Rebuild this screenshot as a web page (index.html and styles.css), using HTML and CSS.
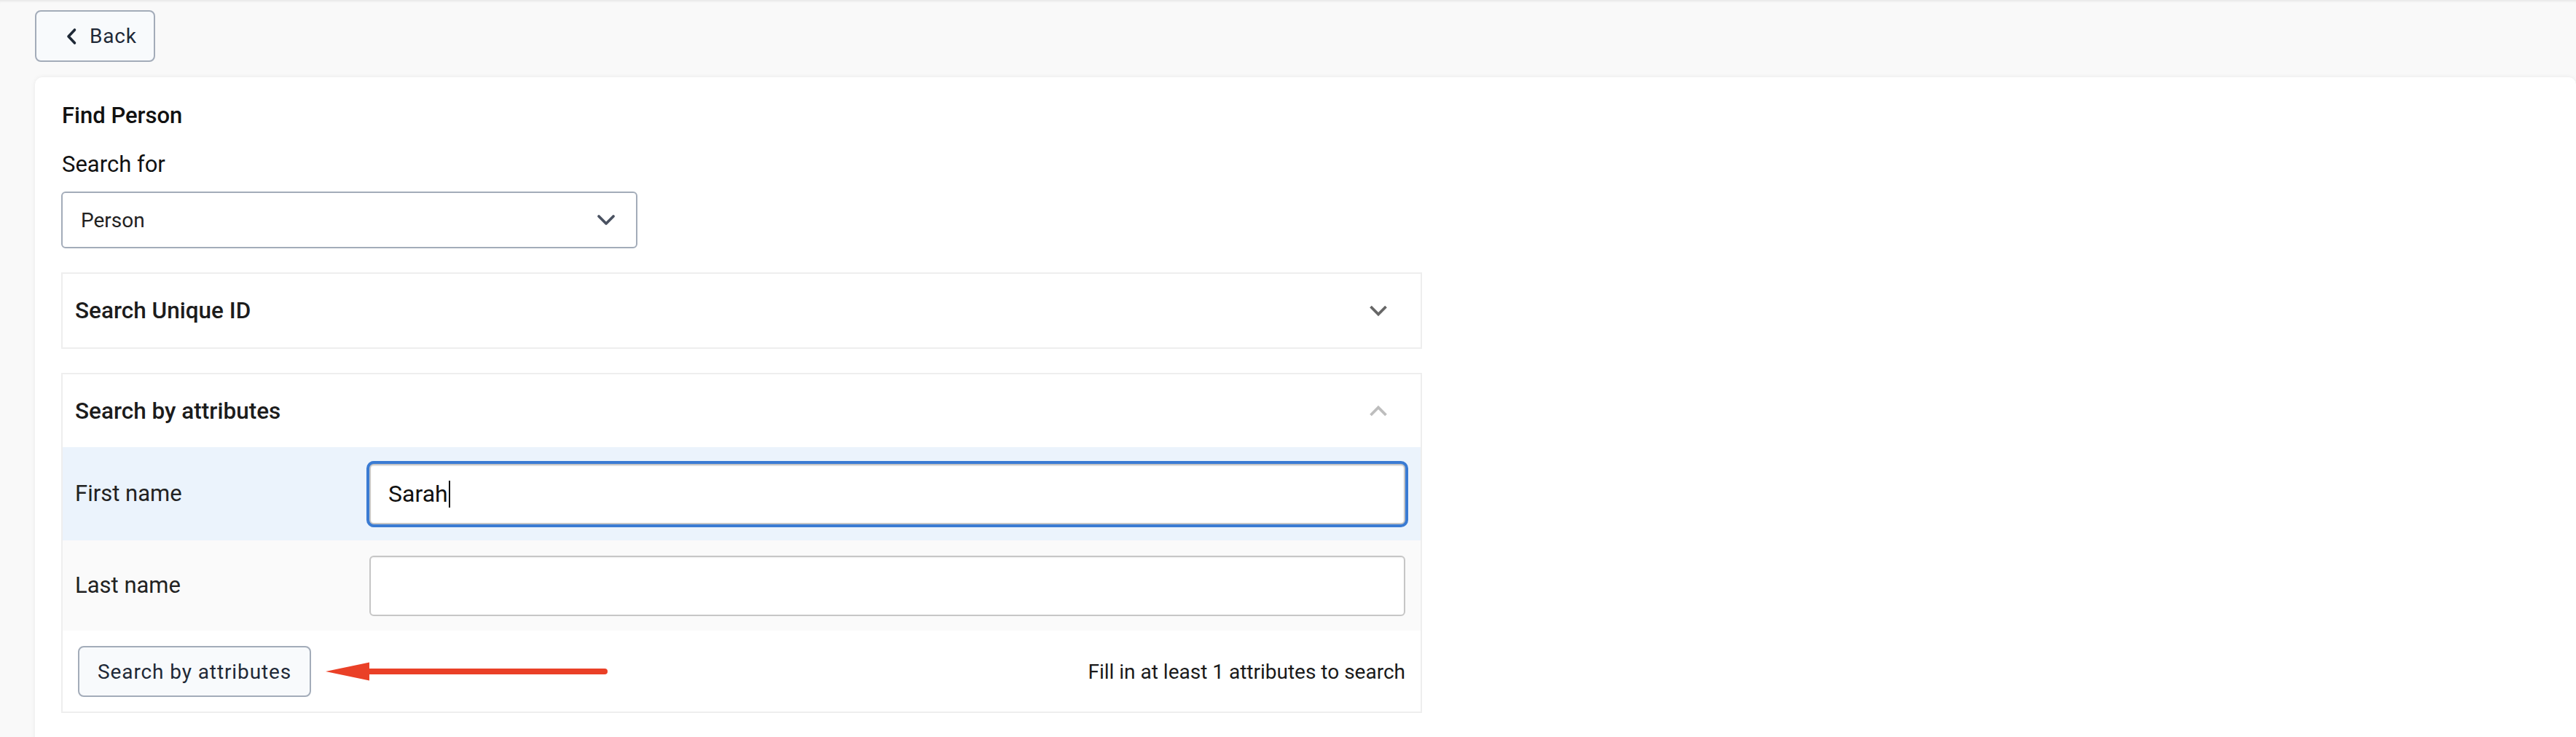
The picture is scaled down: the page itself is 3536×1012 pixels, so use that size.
FILE: index.html
```html
<!DOCTYPE html>
<html lang="en">
<head>
<meta charset="utf-8">
<title>Find Person</title>
<link rel="stylesheet" href="styles.css">
</head>
<body>
<div class="page">
  <div class="toolbar">
    <button class="btn btn-back" type="button">
      <svg class="icon-back" width="16" height="24" viewBox="0 0 16 24" aria-hidden="true"><path d="M12.5 3 L4 12 L12.5 21" fill="none" stroke="#1f2937" stroke-width="3.6" stroke-linecap="round" stroke-linejoin="round"/></svg>
      <span>Back</span>
    </button>
  </div>

  <main class="card">
    <h1 class="card-title">Find Person</h1>
    <div class="field-label">Search for</div>
    <div class="select">
      <span class="select-value">Person</span>
      <svg class="select-chevron" width="26" height="16" viewBox="0 0 26 16" aria-hidden="true"><path d="M3 3 L13 13 L23 3" fill="none" stroke="#4a5261" stroke-width="3.8" stroke-linecap="round" stroke-linejoin="round"/></svg>
    </div>

    <section class="accordion">
      <header class="accordion-head">
        <span class="accordion-title">Search Unique ID</span>
        <svg class="acc-chevron" width="26" height="17" viewBox="0 0 26 17" aria-hidden="true"><path d="M2.5 3 L13 13.5 L23.5 3" fill="none" stroke="#666666" stroke-width="3.8" stroke-linejoin="miter"/></svg>
      </header>
    </section>

    <section class="accordion accordion-open">
      <header class="accordion-head">
        <span class="accordion-title">Search by attributes</span>
        <svg class="acc-chevron" width="26" height="17" viewBox="0 0 26 17" aria-hidden="true"><path d="M2.5 14 L13 3.5 L23.5 14" fill="none" stroke="#bdbdbd" stroke-width="3.8" stroke-linejoin="miter"/></svg>
      </header>
      <div class="attr-row attr-row-active">
        <label class="attr-label">First name</label>
        <div class="input input-focused" role="textbox"><span class="input-text">Sarah</span><span class="caret"></span></div>
      </div>
      <div class="attr-row attr-row-alt">
        <label class="attr-label">Last name</label>
        <div class="input" role="textbox"></div>
      </div>
      <div class="attr-footer">
        <button class="btn btn-search" type="button">Search by attributes</button>
        <svg class="annot-arrow" width="388" height="26" viewBox="0 0 388 26" aria-hidden="true">
          <path d="M60 13 L383 13" stroke="#ea4027" stroke-width="8" stroke-linecap="round"/>
          <polygon points="0,13 60,0.5 60,25.5" fill="#ea4027"/>
        </svg>
        <span class="hint">Fill in at least 1 attributes to search</span>
      </div>
    </section>
  </main>
</div>
</body>
</html>
```

FILE: styles.css
```css
* { box-sizing: border-box; }

html, body {
  margin: 0;
  padding: 0;
}

body {
  background: #f9f9f9;
  font-family: "Roboto", "Liberation Sans", sans-serif;
  color: #222222;
}

.page {
  min-height: 1012px;
  box-shadow: inset 0 4px 3px -2px rgba(0, 0, 0, 0.07);
}

.toolbar {
  padding: 14px 0 0 48px;
  height: 106px;
}

.btn {
  font-family: "Roboto", "Liberation Sans", sans-serif;
  background: #f8fafc;
  border: 2px solid #a3acb9;
  border-radius: 8px;
  color: #1f2937;
  font-size: 28px;
  letter-spacing: 0.8px;
  cursor: pointer;
}

.btn-back {
  display: flex;
  align-items: center;
  width: 165px;
  height: 71px;
  padding: 0 0 0 40px;
  gap: 17px;
}

.icon-back { display: block; }

.card {
  margin-left: 48px;
  min-height: 920px;
  background: #ffffff;
  border-radius: 10px 10px 0 0;
  box-shadow: 0 0 6px rgba(0, 0, 0, 0.07);
  padding: 35px 36px 40px 36px;
}

.card-title {
  margin: 0;
  font-size: 31px;
  line-height: 36px;
  font-weight: 500;
  color: #111111;
  padding-left: 1px;
}

.field-label {
  margin-top: 31px;
  font-size: 31px;
  line-height: 36px;
  color: #111111;
  padding-left: 1px;
}

.select {
  margin-top: 19px;
  width: 791px;
  height: 78px;
  border: 2px solid #a3acb9;
  border-radius: 6px;
  display: flex;
  align-items: center;
  justify-content: space-between;
  padding: 0 28px 0 25px;
}

.select-value {
  font-size: 28px;
  color: #222222;
}

.select-chevron { display: block; }

.accordion {
  margin-top: 33px;
  width: 1868px;
  border: 2px solid #eeeeee;
  background: #ffffff;
}

.accordion-head {
  height: 101px;
  display: flex;
  align-items: center;
  justify-content: space-between;
  padding: 0 45px 0 17px;
}

.accordion-open .accordion-head { height: 100px; }

.accordion-title {
  font-size: 31.5px;
  font-weight: 500;
  color: #1c1c1c;
}

.acc-chevron { display: block; }

.attr-row {
  display: grid;
  grid-template-columns: 404px 1fr;
  align-items: center;
  height: 124px;
  padding: 0 21px 0 17px;
  background: #fafafa;
}

.attr-row-active {
  height: 128px;
  background: #ebf3fc;
}

.attr-label {
  font-size: 31px;
  line-height: 36px;
  color: #222222;
}

.input {
  height: 83px;
  background: #ffffff;
  border: 2px solid #c6c6c6;
  border-radius: 6px;
  box-shadow: inset 0 1px 2px rgba(0, 0, 0, 0.06);
  display: flex;
  align-items: center;
  padding-left: 24px;
}

.input-focused {
  box-shadow: 0 0 0 4px #3a7bd3, inset 0 1px 2px rgba(0, 0, 0, 0.08);
}

.input-text {
  font-size: 32px;
  color: #111111;
}

.caret {
  display: inline-block;
  width: 2px;
  height: 37px;
  background: #111111;
  margin-left: 1px;
}

.attr-footer {
  display: flex;
  align-items: center;
  padding: 21px 21px 20px 21px;
  background: #ffffff;
}

.btn-search {
  height: 70px;
  padding: 0 25px;
  letter-spacing: 0.9px;
}

.annot-arrow {
  display: block;
  margin-left: 20px;
}

.hint {
  margin-left: auto;
  font-size: 28px;
  color: #1a1a1a;
}
```
